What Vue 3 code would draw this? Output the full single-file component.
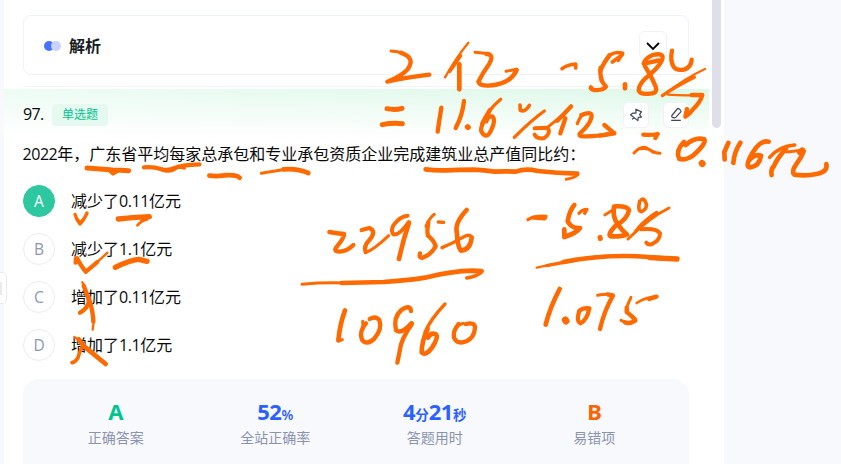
<script setup>
const options = [
  { key: 'A', before: '减少了', num: '0.11', after: '亿元', active: true },
  { key: 'B', before: '减少了', num: '1.1', after: '亿元' },
  { key: 'C', before: '增加了', num: '0.11', after: '亿元' },
  { key: 'D', before: '增加了', num: '1.1', after: '亿元' },
]
const stats = [
  { label: '正确答案', tone: 'green', parts: [['A', '']] },
  { label: '全站正确率', tone: 'blue', parts: [['52', '%']] },
  { label: '答题用时', tone: 'blue', parts: [['4', '分'], ['21', '秒']] },
  { label: '易错项', tone: 'orange', parts: [['B', '']] },
]

// Pen strokes of the annotation layer: [pen width, stroke], drawn at a third of their size from each origin.
const ink = [
  { x: 0, y: 0, strokes: [
    [14, 'M261 504 Q300 507 338 510 Q366 511 386 512'],
    [7, 'M330 515 L339 523 L353 515'],
    [12, 'M432 502 Q463 500 482 507 Q504 514 524 504 Q542 495 598 493'],
    [11, 'M484 508 Q508 518 525 506'],
    [7, 'M532 501 L554 505'],
    [13, 'M628 527 Q650 530 673 526 Q708 523 719 533'],
    [8, 'M784 520 Q830 512 858 508'],
    [13, 'M850 508 Q890 504 925 519'],
  ] },
  { x: 0, y: 180, strokes: [
    [9, 'M225 103 Q228 116 239 130 Q252 121 261 99'],
    [9, 'M231 117 L240 132 L250 120'],
    [15, 'M355 117 Q393 113 448 110'],
    [7, 'M442 118 Q425 121 412 136 M444 114 L424 122'],
    [12, 'M228 235 L227 248 M231 235 Q245 261 257 275 Q272 264 292 246'],
    [6, 'M257 275 Q287 252 322 218'],
    [15, 'M346 262 Q390 240 416 238 L441 244'],
    [6, 'M247 307 L257 330'],
    [12, 'M251 317 Q262 343 267 364 Q261 387 240 398'],
    [12, 'M266 352 Q280 397 280 425'],
    [6, 'M279 410 Q283 430 278 449'],
    [6, 'M223 471 L240 482'],
    [13, 'M236 478 Q245 490 257 503 L317 552'],
    [10, 'M247 499 Q238 516 234 533 Q226 546 216 548'],
  ] },
  { x: 370, y: 30, strokes: [
    [8, 'M63 63 Q83 63 103 73'],
    [12, 'M92 68 Q139 84 112 119 Q92 139 52 155 Q95 145 178 134'],
    [6, 'M295 38 Q259 82 225 142'],
    [9, 'M272 77 Q252 108 239 124'],
    [13, 'M268 103 L268 178'],
    [8, 'M315 67 Q337 69 358 71'],
    [12, 'M349 72 Q374 73 358 101 Q339 127 325 155 Q329 168 356 167 Q421 163 440 120'],
    [8, 'M408 124 L440 118 L428 139'],
    [10, 'M576 116 Q594 103 617 102 L617 114'],
    [14, 'M51 236 Q76 241 96 235 M37 284 Q66 278 97 281'],
    [12, 'M214 233 Q208 270 203 305 M282 213 Q278 255 257 294'],
    [16, 'M293 291 L294 292'],
    [9, 'M392 208 Q356 238 335 281'],
    [12, 'M360 240 Q329 290 334 304 Q349 331 363 302 Q378 271 368 260 Q354 256 349 274'],
    [10, 'M450 225 L451 241 Q466 247 478 226'],
    [9, 'M523 243 Q485 270 433 322'],
    [11, 'M494 295 L533 293 Q544 311 521 325 Q500 327 494 314'],
    [8, 'M535 290 Q575 260 604 230'],
    [12, 'M562 272 Q588 246 603 229 M586 265 L575 298 L571 310'],
    [9, 'M622 281 Q633 251 648 251'],
    [12, 'M634 255 Q670 241 664 263 Q659 284 631 309 Q622 320 645 319 Q679 320 732 309'],
  ] },
  { x: 600, y: 0, strokes: [
    [12, 'M1 211 Q12 187 28 166 M-27 262 Q-30 267 -17 270 Q10 272 18 260 Q8 250 5 240'],
    [12, 'M2 203 Q-1 220 5 242'],
    [10, 'M21 175 Q41 151 68 160 L55 181 M37 186 L67 164'],
    [13, 'M75 253 L75 265'],
    [12, 'M177 181 Q152 187 131 191 Q136 174 158 165 Q193 157 187 178 Q180 197 153 221 Q117 247 116 270 Q119 285 151 281 Q174 279 167 260 Q153 225 134 197'],
    [12, 'M216 152 Q210 180 220 199 Q230 214 254 208 Q274 201 275 179'],
    [6, 'M315 207 Q258 233 187 287'],
    [9, 'M283 232 Q230 258 187 287'],
    [6, 'M204 284 Q254 288 301 285'],
    [12, 'M275 285 L307 285 Q302 305 280 327 Q270 341 256 350 L261 327'],
    [12, 'M13 375 L43 400 L0 407'],
    [12, 'M130 404 Q154 406 173 402 L166 414'],
    [8, 'M102 459 Q126 433 145 447 Q165 460 180 460 M123 446 Q145 443 160 457'],
    [13, 'M252 426 Q225 453 238 477 Q257 482 280 466 Q320 430 313 418 Q285 410 257 435'],
    [19, 'M306 490 L307 491'],
    [13, 'M385 429 L373 456 L374 478 M421 428 Q402 457 400 489 M506 425 Q481 419 456 461 Q433 502 451 502 Q478 499 483 467 Q465 460 446 482'],
    [10, 'M509 472 Q536 439 584 435'],
    [13, 'M558 446 Q530 477 522 498 Q511 509 515 525'],
    [13, 'M598 458 Q607 443 611 453 Q605 472 590 491 Q573 514 583 524 Q620 529 653 521 Q684 514 679 492'],
    [8, 'M560 456 Q580 455 604 451'],
  ] },
  { x: 290, y: 190, strokes: [
    [12, 'M118 126 Q143 130 162 132 Q164 142 141 169 Q128 184 148 185 Q171 184 190 165'],
    [12, 'M215 120 L238 114 Q260 123 240 148 Q219 170 227 186'],
    [8, 'M226 188 Q251 180 296 137'],
    [11, 'M353 77 Q331 78 310 106 Q301 125 311 133 Q327 137 356 97'],
    [13, 'M357 98 Q339 151 327 207'],
    [8, 'M433 73 Q418 84 408 109'],
    [12, 'M415 98 Q410 123 414 137 Q433 153 437 169 Q423 194 400 202 Q386 207 390 190'],
    [9, 'M445 96 L461 97'],
    [13, 'M530 60 Q492 100 501 130 Q502 169 513 182 Q541 179 545 143'],
    [9, 'M456 173 Q488 160 517 143 Q537 130 545 141'],
    [8, 'M36 283 Q110 276 190 280'],
    [13, 'M155 279 L280 276 Q350 272 405 263 Q485 243 548 242 L575 243'],
    [9, 'M575 246 Q562 259 530 264'],
    [13, 'M165 361 Q150 401 145 451'],
    [8, 'M145 453 L157 449'],
    [12, 'M228 400 Q206 425 216 449 Q229 467 252 447 Q278 417 268 390 Q257 376 239 387'],
    [8, 'M218 394 L219 414'],
    [12, 'M363 363 Q361 342 334 360 Q309 382 318 421 Q334 434 365 399'],
    [12, 'M366 401 Q332 450 330 479 L322 518'],
    [9, 'M465 342 Q422 387 405 427'],
    [13, 'M413 416 Q395 453 395 487 Q408 499 426 473 Q446 443 438 433 Q422 426 414 443'],
    [12, 'M506 402 Q488 423 492 443 Q502 465 529 454 Q554 442 555 412 Q554 396 527 402'],
    [8, 'M503 407 L519 400'],
  ] },
  { x: 510, y: 180, strokes: [
    [9, 'M54 119 Q75 106 108 109'],
    [12, 'M70 113 L104 115'],
    [13, 'M193 75 Q178 92 173 124 Q185 146 210 144 Q198 160 163 171 L163 148'],
    [9, 'M207 100 Q216 88 231 88 L224 100'],
    [14, 'M270 172 L271 176'],
    [7, 'M284 105 L313 87'],
    [13, 'M312 80 Q308 103 317 122 Q336 153 351 163 Q338 170 302 169 Q292 163 315 139 Q353 117 357 90 Q350 77 317 79'],
    [10, 'M389 64 Q382 94 395 95 Q412 86 409 72 Q402 51 393 60'],
    [8, 'M477 84 Q421 111 354 177'],
    [10, 'M440 98 Q405 120 377 154'],
    [11, 'M393 148 Q440 144 450 160 Q450 180 430 190 Q417 198 409 188'],
    [6, 'M80 263 Q130 252 185 241'],
    [9, 'M110 257 L190 242'],
    [13, 'M160 246 Q261 227 350 228 Q410 229 455 235'],
    [15, 'M420 233 L501 237'],
    [13, 'M149 327 Q120 382 107 434'],
    [20, 'M166 420 L168 423'],
    [12, 'M208 392 Q198 425 211 430 Q231 420 238 385 Q220 382 209 392'],
    [8, 'M263 346 Q285 341 308 344'],
    [12, 'M293 343 L309 347 Q283 391 270 447'],
    [8, 'M363 352 Q345 388 349 398 Q378 412 378 423 Q359 434 333 421'],
    [12, 'M350 382 L351 396 L375 418 Q365 434 345 427'],
    [7, 'M380 369 Q407 351 442 349'],
    [12, 'M418 357 L439 350'],
  ] },
  { x: 270, y: 135, strokes: [
    [13, 'M467 103 Q494 107 528 106 Q562 104 612 104 Q643 105 674 110 Q707 108 738 110 Q767 99 803 108 Q862 115 922 116'],
    [8, 'M923 119 Q919 127 889 133'],
  ] },
]
</script>

<template>
  <div class="screen">
    <main class="panel">
      <section class="analysis">
        <i class="dots"></i>
        <h2>解析</h2>
        <button class="square toggle">
          <svg width="16" height="16" viewBox="0 0 16 16"><path d="M2 6l6 6 6-6" fill="none" stroke="#050505" stroke-width="1.8" /></svg>
        </button>
      </section>
      <section class="question">
        <header class="head">
          <span class="index">97.</span>
          <span class="tag">单选题</span>
          <button class="square tool first">
            <svg width="16" height="16" viewBox="0 0 16 16" class="icon"><path d="M7.9 2.2L13.4 4.9 11.6 7.6l1.8 2.6-3.1.2-.5 3.2-7.3-5.8L5 6l3 .1z M6.2 10.9L4 12.2" /></svg>
          </button>
          <button class="square tool">
            <svg width="16" height="16" viewBox="0 0 16 16" class="icon"><path d="M9.2 2q1-1 2 0l1.3 1.1q.9 1 .1 2L8 10.2q-.8.8-1.7.6l-2.1-.4q-.7-.8-.3-1.9z M3.2 13.4h9.6" /></svg>
          </button>
        </header>
        <p class="stem"><span class="num">2022</span>年，广东省平均每家总承包和专业承包资质企业完成建筑业总产值同比约：</p>
        <ul class="options">
          <li v-for="o in options" :key="o.key">
            <b class="letter" :class="{ active: o.active }">{{ o.key }}</b>
            <span>{{ o.before }}<span class="num">{{ o.num }}</span>{{ o.after }}</span>
          </li>
        </ul>
        <div class="stats">
          <div v-for="s in stats" :key="s.label" class="stat">
            <div class="value" :class="s.tone"><template v-for="p in s.parts" :key="p[0]">{{ p[0] }}<small v-if="p[1]">{{ p[1] }}</small></template></div>
            <div class="label">{{ s.label }}</div>
          </div>
        </div>
      </section>
    </main>
    <div class="scroll"><i></i></div>
    <div class="handle"><i></i></div>
    <svg class="ink" viewBox="0 0 841 464">
      <g v-for="(g, i) in ink" :key="i" :transform="`translate(${g.x} ${g.y}) scale(.33333)`">
        <path v-for="(s, j) in g.strokes" :key="j" :stroke-width="s[0] + 1" :d="s[1]" />
      </g>
    </svg>
  </div>
</template>

<style>
body { margin: 0; overflow: hidden; }
</style>
<style scoped>
* { box-sizing: border-box; }
.screen {
  position: relative; display: flex; width: 841px; height: 464px; padding-left: 4px;
  overflow: hidden; background: #f8f9fd; color: #0a0a0a;
  font: 16px/24px "Open Sans", "Noto Sans CJK SC", sans-serif;
}
.panel { width: 705px; height: 464px; padding-top: 15px; background: #fff; overflow: hidden; }
.scroll { width: 15px; background: #fff; padding-left: 3px; }
.scroll i { display: block; width: 9px; height: 128px; background: #dfdfe9; border-radius: 0 0 5px 5px; }
.analysis {
  display: flex; align-items: center; height: 60px; margin: 0 20px 0 19px; padding: 0 21px 0 20px;
  border: 1px solid #f0f2fa; border-radius: 8px;
}
.dots { position: relative; width: 17px; height: 10px; margin-top: 1px; }
.dots::before, .dots::after { content: ''; position: absolute; width: 10px; height: 10px; border-radius: 50%; background: #4673ff; }
.dots::after { left: 7px; background: #c8d3ff; }
h2 { margin: 2px 0 0 8px; font-size: 16px; line-height: 24px; font-weight: 700; color: #181c24; }
.square {
  display: flex; align-items: center; justify-content: center; padding: 0;
  background: #fff; border: 1px solid #f0f2fa; border-radius: 5px;
}
.toggle { width: 28px; height: 28px; margin-left: auto; border-radius: 6px; }
.question { position: relative; margin-top: 11px; }
.question::before { content: ''; display: block; height: 1px; margin: 0 20px 2px 19px; background: #f0f4fa; }
.head {
  display: flex; align-items: center; height: 51px; padding: 0 20px 0 19px;
  background: linear-gradient(to bottom, #fff0, #fff 96%), linear-gradient(to right, #edfcf4, #def8e8);
}
.index { width: 29px; margin-top: -1px; letter-spacing: -.6px; }
.tag {
  width: 56px; height: 22px; border-radius: 4px; background: #e6f9f0; color: #00c48f;
  font-size: 12px; line-height: 21px; text-align: center;
}
.tool { width: 26px; height: 26px; }
.tool.first { margin-left: auto; margin-right: 14px; }
.icon path { fill: none; stroke: #3d4756; stroke-width: 1.2; stroke-linejoin: round; }
.stem { margin: 2px 0 0 18.5px; white-space: nowrap; height: 24px; }
.num { letter-spacing: -.45px; }
.options { display: grid; gap: 16px; list-style: none; margin: 19px 0 0 19px; padding: 0; }
.options li { display: flex; align-items: center; gap: 16px; height: 32px; }
.letter {
  width: 32px; height: 32px; border: 1px solid #e9edf8; border-radius: 50%;
  font-weight: 400; line-height: 30px; text-align: center; color: #8c96b3; font-size: 15.5px;
}
.letter.active { background: #2dc8a0; border-color: #2dc8a0; color: #fff; }
.stats {
  display: grid; grid-template-columns: repeat(4, 1fr); height: 100px; margin: 18px 20px 0 19px;
  padding: 19px 15px 0 13px; border-radius: 16px; background: #f8f9fd; text-align: center;
}
.value { height: 28px; line-height: 26px; font-size: 22px; font-weight: 700; font-family: "Noto Sans", "Noto Sans CJK SC", sans-serif; letter-spacing: -.4px; }
.value small { font-size: 13.5px; font-weight: 600; letter-spacing: 0; }
.green { color: #00c48f; }
.blue { color: #2b62ff; }
.orange { color: #ff6200; }
.label { font-size: 14px; line-height: 24px; color: #8b94ae; }
.handle {
  position: absolute; left: -10px; top: 272px; width: 17px; height: 32px; padding-top: 9px;
  border: 1px solid #e9eaf3; border-radius: 5px; background: #fff;
}
.handle i { display: block; width: 11px; height: 13px; background: #e9eaf1; }
.ink { position: absolute; left: 0; top: 0; width: 841px; height: 464px; pointer-events: none; }
.ink path { fill: none; stroke: #ff6a00; stroke-linecap: round; stroke-linejoin: round; }
</style>
